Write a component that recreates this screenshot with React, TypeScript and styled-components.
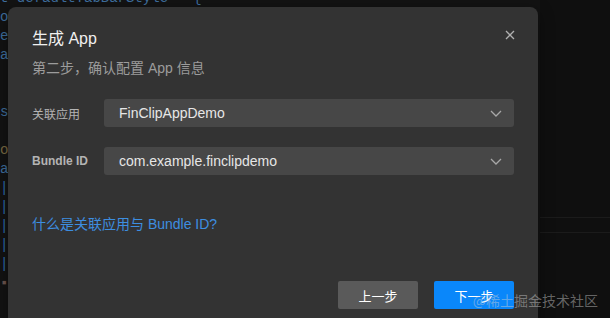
import styled, { createGlobalStyle } from "styled-components";

const GlobalStyle = createGlobalStyle`
  html, body {
    margin: 0;
    padding: 0;
    background: #111111;
  }
`

// only the first character or two of each line peeks out beside the dialog
const codeLines: { text: string; color: string }[] = [
  { text: "t defaultTabBarStyle = {", color: "#3f6f9f" },
  { text: "ol", color: "#3f6f9f" },
  { text: "el", color: "#3f6f9f" },
  { text: "ac", color: "#3f6f9f" },
  { text: "", color: "#3f6f9f" },
  { text: "", color: "#3f6f9f" },
  { text: "st", color: "#3f6f9f" },
  { text: "", color: "#3f6f9f" },
  { text: "oo", color: "#7a6a42" },
  { text: "at", color: "#3f6f9f" },
  { text: "|", color: "#2f6fb0" },
  { text: "|", color: "#2f6fb0" },
  { text: "|", color: "#2f6fb0" },
  { text: "|", color: "#2f6fb0" },
  { text: "|", color: "#2f6fb0" },
  { text: "\u25aa", color: "#6e5650" },
  { text: "", color: "#3f6f9f" },
]

export default function App() {
  return (
    <Screen>
      <GlobalStyle />
      <CodePane>
        {codeLines.map((line, i) => (
          <CodeLine key={i} $color={line.color}>{line.text || "\u00a0"}</CodeLine>
        ))}
      </CodePane>
      <SidePane>
        <SideRow />
      </SidePane>

      <Dialog>
        <Header>
          <Title>生成 App</Title>
          <CloseButton aria-label="close">
            <svg width="10" height="10" viewBox="0 0 10 10">
              <path d="M1 1 L9 9 M9 1 L1 9" stroke="#b0b0b0" strokeWidth="1.3" fill="none" />
            </svg>
          </CloseButton>
        </Header>
        <Subtitle>第二步，确认配置 App 信息</Subtitle>

        <Form>
          <FieldRow>
            <Label>关联应用</Label>
            <Select>
              <span>FinClipAppDemo</span>
              <Chevron />
            </Select>
          </FieldRow>
          <FieldRow>
            <Label $bold>Bundle ID</Label>
            <Select>
              <span>com.example.finclipdemo</span>
              <Chevron />
            </Select>
          </FieldRow>
        </Form>

        <HelpLink>什么是关联应用与 Bundle ID?</HelpLink>

        <Footer>
          <Button>上一步</Button>
          <Button $primary>下一步</Button>
        </Footer>
      </Dialog>

      <Watermark>@稀土掘金技术社区</Watermark>
    </Screen>
  );
}

function Chevron() {
  return (
    <svg width="12" height="7" viewBox="0 0 12 7">
      <polyline points="1,1 6,6 11,1" stroke="#a8a8a8" strokeWidth="1.3" fill="none" />
    </svg>
  )
}

const Screen = styled.div`
  position: relative;
  display: flex;
  width: 610px;
  height: 318px;
  overflow: hidden;
  background: #121212;
`
const CodePane = styled.div`
  width: 540px;
  margin-top: -11px;
  font-family: "Liberation Mono", "DejaVu Sans Mono", monospace;
  font-size: 14px;
  background: #131313;
`
const CodeLine = styled.div<{ $color: string }>`
  height: 19px;
  line-height: 19px;
  white-space: pre;
  color: ${p => p.$color};
`
const SidePane = styled.div`
  flex: 1;
  padding-top: 217px;
  background: #0f0f0f;
`
const SideRow = styled.div`
  height: 14px;
  border-top: 1px solid #1b1b1b;
  border-bottom: 1px solid #1b1b1b;
`
const Dialog = styled.div`
  position: absolute;
  left: 8px;
  top: 7px;
  width: 530px;
  height: 340px;
  box-sizing: border-box;
  padding: 20px 24px;
  border-radius: 8px;
  background: #333333;
  font-family: "Liberation Sans", "Noto Sans CJK SC", sans-serif;
  box-shadow: 0 4px 16px rgba(0, 0, 0, 0.4);
`
const Header = styled.div`
  display: flex;
  justify-content: space-between;
  align-items: flex-start;
`
const Title = styled.div`
  font-size: 16px;
  line-height: 24px;
  color: #f0f0f0;
`
const CloseButton = styled.button`
  display: flex;
  align-items: center;
  justify-content: center;
  width: 16px;
  height: 16px;
  margin-right: -4px;
  padding: 0;
  border: none;
  background: transparent;
`
const Subtitle = styled.div`
  margin-top: 7px;
  font-size: 14px;
  line-height: 20px;
  color: #9c9c9c;
`
const Form = styled.div`
  display: flex;
  flex-direction: column;
  gap: 20px;
  margin-top: 21px;
`
const FieldRow = styled.div`
  display: flex;
  align-items: center;
`
const Label = styled.div<{ $bold?: boolean }>`
  width: 72px;
  flex-shrink: 0;
  font-size: 12px;
  font-weight: ${p => (p.$bold ? 700 : 400)};
  color: #b4b4b4;
`
const Select = styled.div`
  flex: 1;
  display: flex;
  align-items: center;
  justify-content: space-between;
  height: 28px;
  padding: 0 12px 0 15px;
  border-radius: 3px;
  background: #474747;
  font-size: 14px;
  color: #e6e6e6;
`
const HelpLink = styled.div`
  margin-top: 39px;
  font-size: 14px;
  line-height: 20px;
  color: #3d8ee0;
`
const Footer = styled.div`
  display: flex;
  justify-content: flex-end;
  gap: 16px;
  margin-top: 47px;
`
const Button = styled.button<{ $primary?: boolean }>`
  width: 80px;
  height: 28px;
  border: none;
  border-radius: 2px;
  font-family: "Liberation Sans", "Noto Sans CJK SC", sans-serif;
  font-size: 13px;
  color: #ffffff;
  background: ${p => (p.$primary ? "#0a87fa" : "#5a5a5a")};
`
const Watermark = styled.div`
  position: absolute;
  right: 12px;
  bottom: 8px;
  font-family: "Noto Sans CJK SC", sans-serif;
  font-size: 14px;
  line-height: 20px;
  color: rgba(210, 210, 210, 0.45);
`
